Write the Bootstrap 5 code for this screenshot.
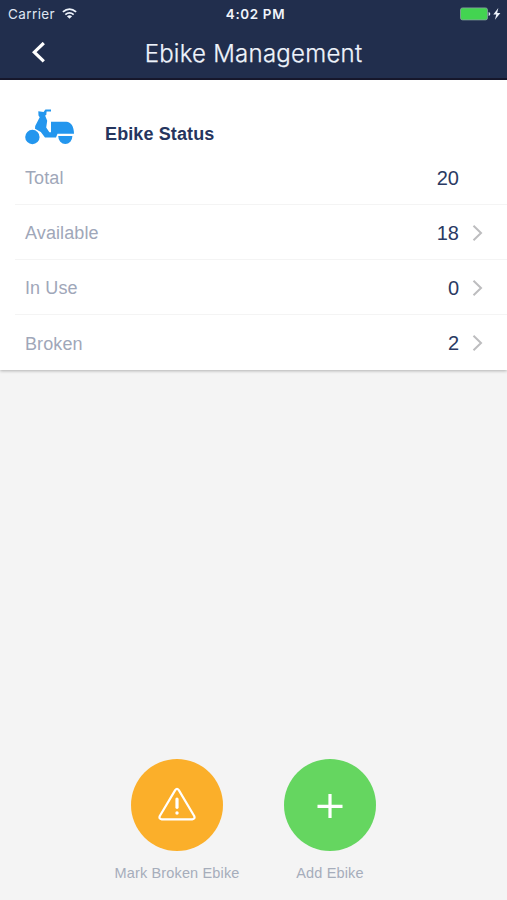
<!DOCTYPE html>
<html lang="en">
<head>
<meta charset="utf-8">
<meta name="viewport" content="width=device-width, initial-scale=1">
<title>Ebike Management</title>
<link rel="stylesheet" href="https://cdn.jsdelivr.net/npm/bootstrap@5.3.0/dist/css/bootstrap.min.css">
<style>
  body { font-family: "Liberation Sans", Arial, sans-serif; background: #f4f4f4; color: #2a3a63; }
  svg { display: block; flex: none; }
  .app-header { height: 80px; background: #212e4d; border-bottom: 2px solid #17182d; font-family: Inter, sans-serif; }
  .status-bar { height: 27px; padding: 0 6px 0 8px; font-size: 13px; color: #dfe6f2; }
  .status-side { flex: 1 1 0; }
  .carrier { font-size: 13.5px; letter-spacing: .4px; padding-top: 1px; margin-right: 6px; }
  .clock { font-weight: 600; font-size: 13.4px; letter-spacing: .65px; color: #f0f4fb; margin-left: 2px; padding-top: 1px; }
  .title-bar { height: 51px; }
  .title-side { width: 54px; padding-left: 31px; }
  .title-bar h1 { font-size: 24px; font-weight: 300; color: #eef3fb; letter-spacing: .25px; line-height: 53px; -webkit-text-stroke: .25px #eef3fb; }
  .status-panel { height: 290px; background: #fff; box-shadow: 0 1px 3px rgba(0,0,0,.28); }
  .panel-head { height: 70px; padding: 28px 0 0 24px; }
  .panel-head h2 { font-size: 18px; font-weight: 700; line-height: 22px; letter-spacing: .12px; margin: 15px 0 0 29px; color: #25355e; }
  .stat-row { height: 55px; margin-left: 15px; padding: 1px 24px 0 10px; font-size: 18px; letter-spacing: .1px; color: #9fa7b9; border-bottom: 1px solid #f4f4f4; }
  .stat-row:last-child { border-bottom: 0; }
  .stat-label { line-height: 26px; padding-top: 1px; }
  .stat-value { font-size: 20px; letter-spacing: 0; color: #2a3a63; margin-right: 13px; }
  .actions { gap: 28px; padding-bottom: 17px; }
  .action { width: 125px; font-size: 14.5px; letter-spacing: .15px; line-height: 20px; color: #a6adbb; white-space: nowrap; }
  .action-disc { width: 92px; height: 92px; margin-bottom: 12px; }
  .disc-warn { background: #fbaf2a; }
  .disc-add { background: #65d660; }
</style>
<script defer src="https://cdn.jsdelivr.net/npm/bootstrap@5.3.0/dist/js/bootstrap.bundle.min.js"></script>
</head>
<body>
<div class="vh-100 d-flex flex-column overflow-hidden">
  <header class="app-header flex-shrink-0">
    <div class="status-bar d-flex align-items-center">
      <div class="status-side d-flex align-items-center">
        <span class="carrier">Carrier</span>
        <svg width="17" height="13" viewBox="0 0 18 13" fill="none" stroke="#eef3fb" stroke-width="2"><path d="M2 4.8Q9 -1.1 16 4.8M4.6 7.7Q9 4 13.4 7.7"/><path d="M6.3 9.3Q9 7.2 11.7 9.3L9 12Z" fill="#eef3fb" stroke="none"/></svg>
      </div>
      <span class="clock">4:02 PM</span>
      <div class="status-side d-flex justify-content-end">
        <svg width="42" height="14" viewBox="0 0 42 14"><rect x="1.5" y=".9" width="27" height="12" rx="2" fill="#43d451" stroke="#87a5a0" stroke-width=".8"/><path d="M29.6 5v4q1.7-.5 1.7-2t-1.7-2" fill="#dfe6f2"/><path d="M39.3 1 34.3 7.5h3l-1.4 5.2 5.5-6.7h-3.2z" fill="#eef3fb"/></svg>
      </div>
    </div>
    <div class="title-bar d-flex">
      <div class="title-side d-flex align-items-center">
        <svg width="15" height="22" viewBox="0 0 15 22" fill="none" stroke="#fff" stroke-width="3.2"><path d="M12.8 1 3.3 10.2l9.5 9.2"/></svg>
      </div>
      <h1 class="flex-fill text-center m-0">Ebike Management</h1>
      <div class="title-side"></div>
    </div>
  </header>

  <main class="d-flex flex-column flex-fill">
    <section class="status-panel">
      <div class="panel-head d-flex">
        <!-- Scooter -->
        <svg width="52" height="38" viewBox="24 108 52 38" fill="#2396ee">
          <circle cx="32.4" cy="137" r="7.2"/>
          <path d="M38.3 111.2 43.6 112 45.4 109.4H51v2.1h-4.4L46.3 115l-1.2.6 2.1 5.1-1 6.8 3.2 4.8h1.6V121.8h15.4c4.5 0 7.7 5 7.6 11.9H57.5L56 137.5H45L40.8 132 35 128.7 35.2 126.1 39.7 117.2 38.5 115.5Z"/>
          <path d="M58.2 136h14.2a7.1 8 0 0 1-14.2 0Z"/>
        </svg>
        <h2>Ebike Status</h2>
      </div>
      <div class="stat-row d-flex align-items-center"><span class="stat-label">Total</span><span class="stat-value ms-auto">20</span><svg width="11" height="18"></svg></div>
      <div class="stat-row d-flex align-items-center"><span class="stat-label">Available</span><span class="stat-value ms-auto">18</span><svg width="11" height="18" viewBox="0 0 11 18" fill="none" stroke="#bdbdbf" stroke-width="2"><path d="m1.5 1.8 7.5 7.2-7.5 7.2"/></svg></div>
      <div class="stat-row d-flex align-items-center"><span class="stat-label">In Use</span><span class="stat-value ms-auto">0</span><svg width="11" height="18" viewBox="0 0 11 18" fill="none" stroke="#bdbdbf" stroke-width="2"><path d="m1.5 1.8 7.5 7.2-7.5 7.2"/></svg></div>
      <div class="stat-row d-flex align-items-center"><span class="stat-label">Broken</span><span class="stat-value ms-auto">2</span><svg width="11" height="18" viewBox="0 0 11 18" fill="none" stroke="#bdbdbf" stroke-width="2"><path d="m1.5 1.8 7.5 7.2-7.5 7.2"/></svg></div>
    </section>

    <div class="actions d-flex justify-content-center mt-auto">
      <div class="action d-flex flex-column align-items-center">
        <div class="action-disc disc-warn rounded-circle d-flex align-items-center justify-content-center">
          <svg width="38" height="36" viewBox="0 0 38 36" fill="none" stroke="#fff" stroke-linecap="round" stroke-linejoin="round"><path stroke-width="2.2" d="M17.2 3.1q1.8-2.3 3.6 0L36.2 29q1.2 3-1.9 3.3H3.7Q.6 32 1.8 29Z"/><path stroke-width="3.2" d="M19 12v8.3"/><circle cx="19" cy="26" r="1.7" fill="#fff" stroke="none"/></svg>
        </div>
        <span>Mark Broken Ebike</span>
      </div>
      <div class="action d-flex flex-column align-items-center">
        <div class="action-disc disc-add rounded-circle d-flex align-items-center justify-content-center">
          <svg width="26" height="26" viewBox="0 0 26 26" stroke="#fff" stroke-width="3.2"><path d="M13 2v24.5M.5 14.3h25"/></svg>
        </div>
        <span>Add Ebike</span>
      </div>
    </div>
  </main>
</div>
</body>
</html>
